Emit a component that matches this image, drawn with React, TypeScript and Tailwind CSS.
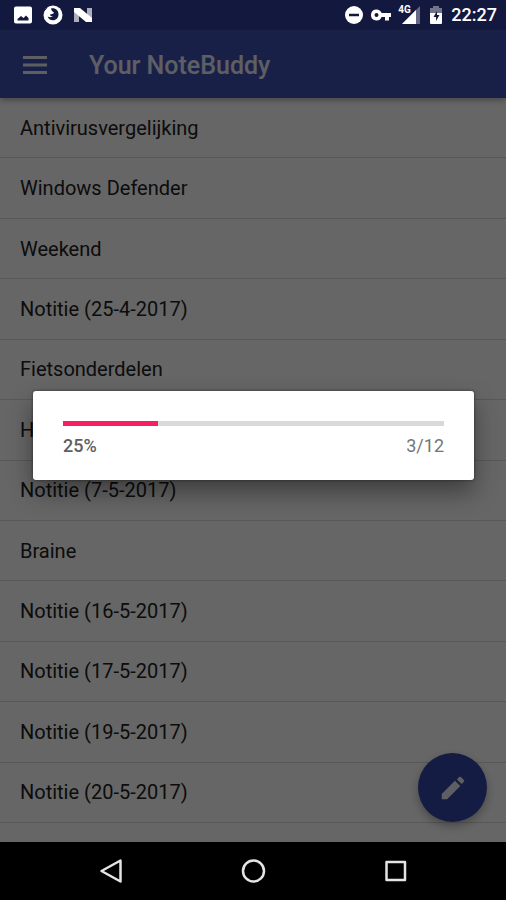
import React from 'react';

const TOTAL_NOTES = 12;
const IMPORTED_NOTES = 3;

/** Titles shown in the list, the list shows them oldest first */
const notes = [
  'Antivirusvergelijking',
  'Windows Defender',
  'Weekend',
  'Notitie (25-4-2017)',
  'Fietsonderdelen',
  'H',
  'Notitie (7-5-2017)',
  'Braine',
  'Notitie (16-5-2017)',
  'Notitie (17-5-2017)',
  'Notitie (19-5-2017)',
  'Notitie (20-5-2017)',
];

/** Android status bar, stays bright while a dialog is open */
const StatusBar: React.FC = () => (
  <div className="relative z-20 flex h-[30px] shrink-0 items-center justify-between bg-[#13183f] pl-[13px] pr-[9px] text-white">
    <div className="flex items-center gap-[10px]">
      {/* Picture */}
      <svg viewBox="0 0 20 20" className="h-5 w-5" fill="currentColor">
        <path fillRule="evenodd" d="M3 1.500h14a2 2 0 0 1 2 2v13a2 2 0 0 1-2 2H3a2 2 0 0 1-2-2v-13a2 2 0 0 1 2-2zM4.500 15.500h11v-2.500l-2.500-2.500-2.500 2.500L8 11l-3.500 3z" />
      </svg>
      {/* Firefox */}
      <svg viewBox="0 0 20 20" className="h-5 w-5">
        <circle cx="10" cy="10" r="9.500" fill="currentColor" />
        <path fill="#13183f" d="M8 3.500c4-1 7.500 1.500 7.500 5.800 0 3.700-2.500 6-5.500 6-2.700 0-4.800-1.500-5.300-3.800 1.700 1 4 .8 5-.5-1.500.2-2.700-.5-2.700-1.600l3-.6c.8-.4 1-1.200.4-1.800-1.200-.4-2-1.500-2.400-3.500z" />
        <path d="M3.500 0v3.500L1 6" stroke="#13183f" strokeWidth="1" fill="none" />
      </svg>
      {/* Android N */}
      <svg viewBox="0 0 20 20" className="h-5 w-5" fill="currentColor">
        <path opacity=".65" d="M1 4h5v13H1zM14 3h5v13h-5z" />
        <path d="M1 3h6l12 10v4h-6L1 7z" />
      </svg>
    </div>

    <div className="flex items-center">
      {/* Do not disturb */}
      <svg viewBox="0 0 20 20" className="h-5 w-5">
        <circle cx="10" cy="10" r="9" fill="currentColor" />
        <path d="M5 10h10" stroke="#13183f" strokeWidth="2.500" />
      </svg>
      {/* VPN key */}
      <svg viewBox="0 0 22 20" className="ml-[6px] h-5 w-[22px]" fill="currentColor">
        <path fillRule="evenodd" d="M6.500 4.500a5.500 5.500 0 1 0 5.100 7.500H15v3.500h4V12h2V8h-9.400a5.500 5.500 0 0 0-5.100-3.500zm0 3.500a2 2 0 1 1 0 4 2 2 0 0 1 0-4z" />
      </svg>
      {/* Mobile signal */}
      <div className="relative ml-[6px] h-5 w-[22px]">
        <svg viewBox="0 0 22 20" className="h-5 w-[22px]" fill="currentColor">
          <path opacity=".35" d="M22 1v18H4z" />
          <path d="M18 5v14H4z" />
        </svg>
        <span className="absolute left-0 top-0 text-[10px] font-bold leading-[10px]">4G</span>
      </div>
      {/* Charging battery */}
      <svg viewBox="0 0 14 20" className="ml-[9px] h-5 w-[14px]" fill="currentColor">
        <path opacity=".4" d="M4 1h6v2h3v6H1V3h3z" />
        <path d="M1 8h12v10a1 1 0 0 1-1 1H2a1 1 0 0 1-1-1z" />
        <path fill="#13183f" d="M8 6 4.500 12H7v4l3.500-6H8z" />
      </svg>
      <span className="ml-2 text-[18px] font-medium leading-6">22:27</span>
    </div>
  </div>
);

const AppBar: React.FC = () => (
  <header className="relative flex h-[68px] shrink-0 items-center bg-[#3f51b5] pl-[22px] pt-[3px] text-white/90 shadow-[0_2px_6px_rgba(0,0,0,0.35)]">
    <button aria-label="Open menu" className="h-[26px] w-[26px]">
      <svg viewBox="0 0 26 26" className="h-[26px] w-[26px]" stroke="currentColor" strokeWidth="3">
        <path d="M1 4.500h24M1 12h24M1 19.500h24" />
      </svg>
    </button>
    <h1 className="ml-[41px] text-[25px] font-medium leading-8">Your NoteBuddy</h1>
  </header>
);

interface ProgressDialogProps {
  done: number;
  total: number;
}

/** Dialog with the progress of the running import */
const ProgressDialog: React.FC<ProgressDialogProps> = ({ done, total }) => {
  const percent = Math.round((done / total) * 100);

  return (
    <div className="absolute inset-0 z-10 flex items-center justify-center bg-black/60 pb-[30px] pl-[33px] pr-8">
      <div
        role="dialog"
        aria-label="Progress"
        className="w-full rounded-[3px] bg-white px-[30px] pb-[22px] pt-[30px] shadow-[0_12px_24px_rgba(0,0,0,0.4),0_0_3px_rgba(0,0,0,0.5)]"
      >
        <div role="progressbar" aria-label="Notes" aria-valuenow={percent} className="h-[5px] bg-[#d9d9d9]">
          <div className="h-full bg-[#f91e63]" style={{ width: `${percent}%` }} />
        </div>
        <div className="mt-2 flex justify-between text-[18px] leading-6 text-[#757575]">
          <span className="font-medium text-[#606060]">{percent}%</span>
          <span>
            {done}/{total}
          </span>
        </div>
      </div>
    </div>
  );
};

const NavigationBar: React.FC = () => (
  <nav className="relative z-20 grid h-[58px] shrink-0 grid-cols-3 items-center justify-items-center bg-black px-10 text-[#e4e4e4]">
    <button aria-label="Back">
      <svg viewBox="0 0 26 26" className="h-[26px] w-[26px]" fill="none" stroke="currentColor" strokeWidth="2.500" strokeLinejoin="round">
        <path d="M22.500 2.500v21L3.500 13z" />
      </svg>
    </button>
    <button aria-label="Home">
      <svg viewBox="0 0 26 26" className="h-[26px] w-[26px]" fill="none" stroke="currentColor" strokeWidth="2.500">
        <circle cx="13.500" cy="13" r="10.500" />
      </svg>
    </button>
    <button aria-label="Recent apps">
      <svg viewBox="0 0 26 26" className="h-[26px] w-[26px]" fill="none" stroke="currentColor" strokeWidth="2.500" strokeLinejoin="round">
        <path d="M4.500 4h18.500v18H4.500z" />
      </svg>
    </button>
  </nav>
);

const App: React.FC = () => {
  return (
    <div className="relative flex min-h-screen flex-col bg-white font-[Roboto,sans-serif]">
      <StatusBar />
      <AppBar />

      <main className="flex-1">
        <ul className="grid h-[725px] auto-rows-fr">
          {notes.map((note) => (
            <li key={note} className="flex items-center border-b border-[#dcdcdc] px-5 text-[20px] leading-6 text-[#212121]">
              {note}
            </li>
          ))}
        </ul>
      </main>

      <button
        aria-label="New note"
        className="absolute bottom-[78px] right-[19px] flex h-[69px] w-[69px] items-center justify-center rounded-full bg-[#3646a8] text-white/90 shadow-[0_4px_10px_rgba(0,0,0,0.3)]"
      >
        <svg viewBox="0 0 24 24" className="h-[30px] w-[30px]" fill="currentColor">
          <path d="M3 16.750V21h4.250L17.810 10.440l-4.250-4.250L3 16.750zM20.710 7.040a1 1 0 0 0 0-1.410l-2.340-2.340a1 1 0 0 0-1.410 0l-1.830 1.830 3.750 3.750 1.830-1.830z" />
        </svg>
      </button>

      <ProgressDialog done={IMPORTED_NOTES} total={TOTAL_NOTES} />
      <NavigationBar />
    </div>
  );
};

export default App;
